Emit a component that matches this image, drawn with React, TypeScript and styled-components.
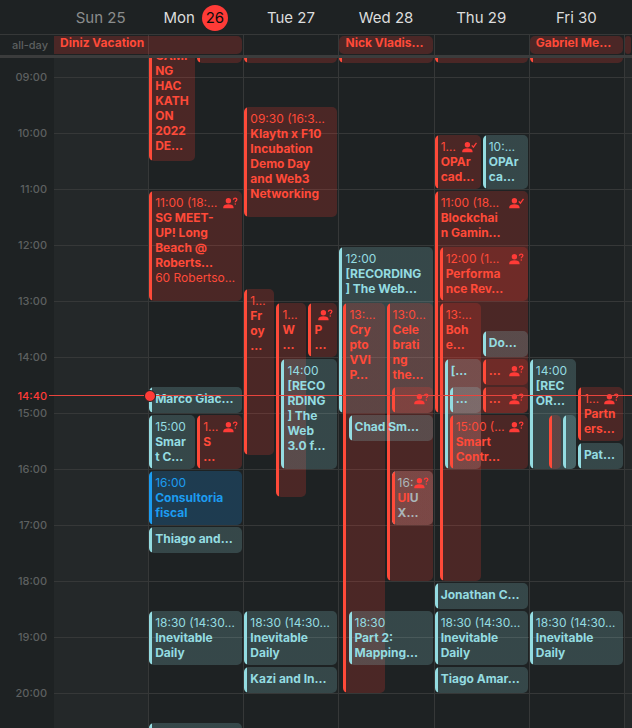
import React from "react";
import styled, { createGlobalStyle, css } from "styled-components";

const GlobalStyle = createGlobalStyle`
  *, *::before, *::after { box-sizing: border-box; }
  body {
    margin: 0;
    background: #1e2223;
    font-family: Inter, "Liberation Sans", sans-serif;
    font-size: 12px;
    line-height: 15px;
    color: #dcdddd;
  }
`;

type Tone = "red" | "teal" | "blue";

const tones: Record<Tone, { solid: string; fill: string }> = {
  red: { solid: "#ff4a39", fill: "rgba(255, 59, 48, 0.2)" },
  teal: { solid: "#94dce1", fill: "rgba(148, 220, 225, 0.2)" },
  blue: { solid: "#1c9cf0", fill: "rgba(30, 150, 240, 0.22)" },
};

const LINE = "#363838";
const FIRST_HOUR = 8;
const LAST_HOUR = 21;
const HOUR_HEIGHT = 56;
const QUARTER_HEIGHT = 14;
/* A day is divided into this many equal units across for side-by-side events. */
const DAY_UNITS = 94;

interface CalEvent {
  from: number;
  to: number;
  x?: number;
  w?: number;
  tone: Tone;
  time?: React.ReactNode;
  title?: React.ReactNode;
  place?: string;
  rsvp?: "?" | "ok";
  anchor?: "end";
}

interface Day {
  name: string;
  date: number;
  weekend?: boolean;
  today?: boolean;
  events: CalEvent[];
}

const Faded = styled.span`
  color: #aab6b9;
`;

const daily: CalEvent = {
  from: 18.5, to: 19.5, w: 93, tone: "teal", time: "18:30 (14:30…", title: "Inevitable\nDaily",
};

const days: Day[] = [
  { name: "Sun", date: 25, weekend: true, events: [] },
  {
    name: "Mon", date: 26, today: true,
    events: [
      { from: 8, to: 10.5, w: 46, tone: "red", anchor: "end", title: "GAMI\nNG\nHAC\nKATH\nON\n2022\nDE…" },
      { from: 8, to: 8.75, x: 48, w: 45, tone: "red" },
      { from: 11, to: 13, w: 93, tone: "red", time: "11:00 (18:…", title: "SG MEET-\nUP! Long\nBeach @\nRoberts…", place: "60 Robertso…", rsvp: "?" },
      { from: 14.5, to: 15, w: 93, tone: "teal", title: "Marco Giac…" },
      { from: 15, to: 16, w: 46, tone: "teal", time: "15:00", title: "Smar\nt C…" },
      { from: 15, to: 16, x: 48, w: 45, tone: "red", time: "1…", title: "S\n…", rsvp: "?" },
      { from: 16, to: 17, w: 93, tone: "blue", time: "16:00", title: "Consultoria\nfiscal" },
      { from: 17, to: 17.5, w: 93, tone: "teal", title: "Thiago and…" },
      daily,
      { from: 20.5, to: 21, w: 93, tone: "teal" },
    ],
  },
  {
    name: "Tue", date: 27,
    events: [
      { from: 8, to: 8.75, w: 93, tone: "red" },
      { from: 9.5, to: 11.5, w: 93, tone: "red", time: "09:30 (16:3…", title: "Klaytn x F10\nIncubation\nDemo Day\nand Web3\nNetworking" },
      { from: 12.75, to: 15.75, w: 30, tone: "red", time: "1…", title: "Fr\noy\n…" },
      { from: 13, to: 16.5, x: 32, w: 30, tone: "red", time: "1…", title: "W\n…" },
      { from: 13, to: 14, x: 64, w: 29, tone: "red", time: " ", title: "P\n…", rsvp: "?" },
      { from: 14, to: 16, x: 37, w: 56, tone: "teal", time: "14:00", title: "[RECO\nRDING\n] The\nWeb\n3.0 f…" },
      daily,
      { from: 19.5, to: 20, w: 93, tone: "teal", title: "Kazi and In…" },
    ],
  },
  {
    name: "Wed", date: 28,
    events: [
      { from: 8, to: 8.75, w: 93, tone: "red" },
      { from: 12, to: 15, w: 93, tone: "teal", time: "12:00", title: "[RECORDING\n] The Web…" },
      { from: 13, to: 20, x: 4, w: 41, tone: "red", time: "13:…", title: "Cry\npto\nVVI\nP…" },
      { from: 13, to: 18, x: 47, w: 46, tone: "red", time: "13:0…", title: "Cele\nbrati\nng\nthe…" },
      { from: 14.5, to: 15, x: 52, w: 41, tone: "red", rsvp: "?" },
      { from: 15, to: 15.5, x: 9, w: 84, tone: "teal", title: "Chad Sm…" },
      { from: 16, to: 17, x: 52, w: 41, tone: "teal" },
      {
        from: 16, to: 17, x: 52, w: 41, tone: "red", rsvp: "?",
        time: <Faded>16:</Faded>,
        title: <>UI<Faded>{"U\nX…"}</Faded></>,
      },
      { ...daily, x: 9, w: 84, time: "18:30", title: "Part 2:\nMapping…" },
    ],
  },
  {
    name: "Thu", date: 29,
    events: [
      { from: 8, to: 8.75, w: 93, tone: "red" },
      { from: 10, to: 11, w: 46, tone: "red", time: "1…", title: "OPAr\ncad…", rsvp: "ok" },
      { from: 10, to: 11, x: 48, w: 45, tone: "teal", time: "10:…", title: "OPAr\nca…" },
      { from: 11, to: 15, w: 93, tone: "red", time: "11:00 (18…", title: "Blockchai\nn Gamin…", rsvp: "ok" },
      { from: 12, to: 13, x: 5, w: 88, tone: "red", time: "12:00 (1…", title: "Performa\nnce Rev…", rsvp: "?" },
      { from: 13, to: 18, x: 5, w: 41, tone: "red", time: "13:…", title: "Boh\ne…" },
      { from: 13.5, to: 14, x: 48, w: 45, tone: "teal", title: "Do…" },
      { from: 14, to: 16, x: 10, w: 36, tone: "teal", title: "[…" },
      { from: 14, to: 14.5, x: 48, w: 45, tone: "red", title: "…", rsvp: "?" },
      { from: 14.5, to: 15, x: 15, w: 31, tone: "teal", title: "…" },
      { from: 14.5, to: 15, x: 48, w: 45, tone: "red", title: "…", rsvp: "?" },
      { from: 15, to: 16, x: 15, w: 78, tone: "red", time: "15:00 (…", title: "Smart\nContr…", rsvp: "?" },
      { from: 18, to: 18.5, w: 93, tone: "teal", title: "Jonathan C…" },
      daily,
      { from: 19.5, to: 20, w: 93, tone: "teal", title: "Tiago Amar…" },
    ],
  },
  {
    name: "Fri", date: 30,
    events: [
      { from: 8, to: 8.75, w: 93, tone: "red" },
      { from: 14, to: 16, w: 46, tone: "teal", time: "14:00", title: "[REC\nOR…" },
      { from: 15, to: 16, x: 19, w: 12, tone: "red" },
      { from: 15, to: 16, x: 33, w: 13, tone: "teal" },
      { from: 14.5, to: 15.5, x: 48, w: 45, tone: "red", time: "1…", title: "Partn\ners…", rsvp: "?" },
      { from: 15.5, to: 16, x: 48, w: 45, tone: "teal", title: "Pat…" },
      daily,
    ],
  },
];

/* The first hour is scrolled out of view, so labels begin one hour later. */
const labelledHours = Array.from({ length: LAST_HOUR - FIRST_HOUR - 1 }, (_, i) => FIRST_HOUR + 1 + i);

const Calendar = styled.main`
  display: flex;
  flex-direction: column;
  height: 100vh;
  overflow: hidden;
`;

const weekColumns = css`
  display: grid;
  grid-template-columns: 53px repeat(6, minmax(0, 1fr)) 8px;
`;

const HeaderRow = styled.header`
  ${weekColumns}
  padding: 3px 0 1px;
  flex: none;
`;

const DayHeading = styled.h2<{ $muted?: boolean }>`
  display: flex;
  align-items: center;
  justify-content: center;
  gap: 7px;
  margin: 0;
  font-size: 15px;
  font-weight: 400;
  line-height: 30px;
  color: ${(p) => (p.$muted ? "#8b8d8d" : "#dcdddd")};
`;

const TodayDisc = styled.span`
  width: 26px;
  height: 26px;
  border-radius: 50%;
  background: #ff3b37;
  color: #0c0c0c;
  line-height: 26px;
  text-align: center;
`;

const AllDayRow = styled.section`
  ${weekColumns}
  grid-template-rows: 20px;
  flex: none;
  border-top: 1px solid ${LINE};
  border-bottom: 3px solid #3b3c3c;
  box-sizing: content-box;
`;

const AllDayLabel = styled.span`
  grid-area: 1 / 1;
  padding-right: 5px;
  font-size: 11px;
  font-weight: 500;
  line-height: 20px;
  text-align: right;
  color: #5d6060;
`;

const AllDayCell = styled.div<{ $col: number }>`
  grid-area: 1 / ${(p) => p.$col};
  border-left: 1px solid ${(p) => (p.$col === 2 ? "transparent" : LINE)};
`;

const AllDayEvent = styled.button<{ $col: number; $span: number; $openLeft?: boolean }>`
  grid-area: 1 / ${(p) => p.$col} / auto / span ${(p) => p.$span};
  margin: 1px;
  padding: 0 0 4px 6px;
  border: 0;
  border-radius: ${(p) => (p.$openLeft ? "0 5px 5px 0" : "5px")};
  background: ${tones.red.fill};
  color: ${tones.red.solid};
  font: 700 12px/14px Inter, "Liberation Sans", sans-serif;
  text-align: left;
  white-space: nowrap;
  overflow: hidden;
`;

const Scroller = styled.section`
  flex: 1;
  min-height: 0;
  overflow: hidden;
`;

const Week = styled.div`
  ${weekColumns}
  position: relative;
  margin-top: -37px;
`;

const Gutter = styled.div`
  display: grid;
  grid-auto-rows: ${HOUR_HEIGHT}px;
  padding-top: ${HOUR_HEIGHT}px;
`;

const HourLabel = styled.time`
  margin-top: -7px;
  padding-right: 6px;
  font-size: 11px;
  font-weight: 500;
  text-align: right;
  color: #5d6060;
`;

const DayColumn = styled.div<{ $weekend?: boolean; $first?: boolean }>`
  display: grid;
  grid-template-columns: minmax(0, 1fr);
  grid-template-rows: repeat(${(LAST_HOUR - FIRST_HOUR) * 4}, ${QUARTER_HEIGHT}px);
  border-left: 1px solid ${(p) => (p.$first ? "transparent" : LINE)};
  background: repeating-linear-gradient(${LINE} 0 1px, transparent 1px ${HOUR_HEIGHT}px)
    ${(p) => (p.$weekend ? "#242829" : "transparent")};
  background-clip: padding-box;
`;

const row = (hour: number) => (hour - FIRST_HOUR) * 4 + 1;

const EventCard = styled.button<{ $from: number; $to: number; $x: number; $w: number; $tone: Tone; $end: boolean }>`
  position: relative;
  display: flex;
  flex-direction: column;
  justify-content: ${(p) => (p.$end ? "flex-end" : "flex-start")};
  grid-row: ${(p) => row(p.$from)} / ${(p) => row(p.$to)};
  grid-column: 1;
  margin: 2px 0 0 ${(p) => (p.$x / DAY_UNITS) * 100}%;
  width: ${(p) => (p.$w / DAY_UNITS) * 100}%;
  padding: 4px 0 8px 6px;
  border: 0;
  border-radius: 5px;
  background: ${({ $tone }) =>
    `linear-gradient(to right, ${tones[$tone].solid} 3px, ${tones[$tone].fill} 3px)`};
  color: ${(p) => tones[p.$tone].solid};
  font: 400 12px/15px Inter, "Liberation Sans", sans-serif;
  text-align: left;
  white-space: pre;
  overflow: hidden;
`;

const EventTime = styled.time`
  min-height: 15px;
  flex: none;
`;

const EventTitle = styled.strong`
  flex: none;
  font-weight: 700;
`;

const EventPlace = styled.span`
  flex: none;
`;

const RsvpBadge = styled.svg`
  position: absolute;
  top: 6px;
  right: 4px;
  width: 15px;
  height: 12px;
  fill: #ff3b37;
  stroke: none;
`;

const BadgeStroke = styled.path`
  fill: none;
  stroke: #ff3b37;
  stroke-width: 1.3;
`;

const NowMarker = styled.div`
  position: absolute;
  top: ${Math.round((6 + 40 / 60) * HOUR_HEIGHT) - 7}px;
  left: 0;
  right: 0;
  display: flex;
  align-items: center;
  height: 17px;
  pointer-events: none;
`;

const NowLabel = styled.time`
  width: 47px;
  padding-top: 1px;
  font-size: 11px;
  font-weight: 500;
  text-align: right;
  color: #ff3b37;
`;

const NowRule = styled.span`
  flex: 1;
  height: 1px;
  margin-left: 2px;
  background: #e8443d;
`;

const NowTrack = styled.div`
  ${weekColumns}
  position: absolute;
  inset: 0;
  align-items: center;
`;

const NowDot = styled.span`
  grid-column: 3;
  width: 12px;
  height: 12px;
  margin-left: -4px;
  border: 1px solid #1e2223;
  border-radius: 50%;
  background: #ff3b37;
`;

function Rsvp({ kind }: { kind: "?" | "ok" }) {
  return (
    <RsvpBadge viewBox="0 0 15 12" aria-hidden="true">
      <circle cx="5.4" cy="3.8" r="2.7" />
      <path d="M0.2 11.2V10.4C0.2 8.4 2.4 7.3 5.4 7.3S10.6 8.4 10.6 10.4V11.2Z" />
      {kind === "ok" ? (
        <BadgeStroke d="M9.8 4.4L11.4 6.2L14.5 1.8" />
      ) : (
        <>
          <BadgeStroke d="M10.4 2.8C10.5 1.6 11.3 1.2 12.2 1.2C13.2 1.2 13.9 1.8 13.9 2.6C13.9 3.8 12.3 3.8 12.3 5.3" />
          <circle cx="12.3" cy="7" r="0.8" />
        </>
      )}
    </RsvpBadge>
  );
}

function EventView({ event }: { event: CalEvent }) {
  return (
    <EventCard
      type="button"
      $from={event.from}
      $to={event.to}
      $x={event.x ?? 0}
      $w={event.w ?? DAY_UNITS}
      $tone={event.tone}
      $end={event.anchor === "end"}
    >
      {event.time && <EventTime>{event.time}</EventTime>}
      {event.title && <EventTitle>{event.title}</EventTitle>}
      {event.place && <EventPlace>{event.place}</EventPlace>}
      {event.rsvp && <Rsvp kind={event.rsvp} />}
    </EventCard>
  );
}

export default function App() {
  return (
    <>
      <GlobalStyle />
      <Calendar>
        <HeaderRow>
          <span />
          {days.map((d) => (
            <DayHeading key={d.name} $muted={d.weekend}>
              {d.today ? (
                <>
                  {d.name} <TodayDisc>{d.date}</TodayDisc>
                </>
              ) : (
                `${d.name} ${d.date}`
              )}
            </DayHeading>
          ))}
        </HeaderRow>
        <AllDayRow>
          <AllDayLabel>all-day</AllDayLabel>
          {[2, 3, 4, 5, 6, 7, 8].map((col) => (
            <AllDayCell key={col} $col={col} />
          ))}
          <AllDayEvent type="button" $col={2} $span={2} $openLeft>Diniz Vacation</AllDayEvent>
          <AllDayEvent type="button" $col={5} $span={1}>Nick Vladis…</AllDayEvent>
          <AllDayEvent type="button" $col={7} $span={1}>Gabriel Me…</AllDayEvent>
          <AllDayEvent type="button" $col={8} $span={1} />
        </AllDayRow>
        <Scroller>
          <Week>
            <Gutter>
              {labelledHours.map((h) => (
                <HourLabel key={h}>{`${String(h).padStart(2, "0")}:00`}</HourLabel>
              ))}
            </Gutter>
            {days.map((d, i) => (
              <DayColumn key={d.name} $weekend={d.weekend} $first={i === 0}>
                {d.events.map((e, n) => (
                  <EventView key={n} event={e} />
                ))}
              </DayColumn>
            ))}
            <DayColumn $weekend />
            <NowMarker>
              <NowLabel>14:40</NowLabel>
              <NowRule />
              <NowTrack>
                <NowDot />
              </NowTrack>
            </NowMarker>
          </Week>
        </Scroller>
      </Calendar>
    </>
  );
}
